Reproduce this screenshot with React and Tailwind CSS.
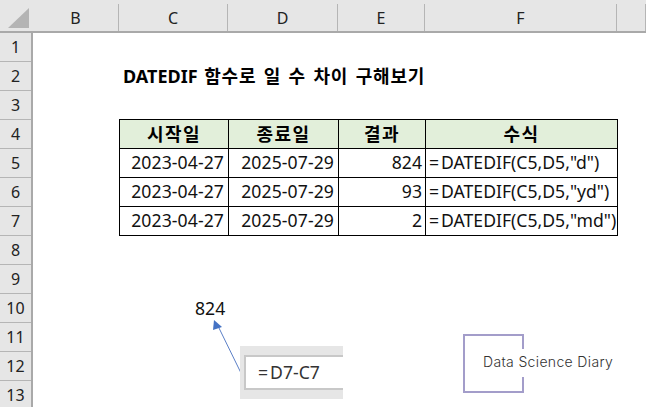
const font = "font-['Noto_Sans','Noto_Sans_CJK_KR',sans-serif]";

const columns = [
  { name: 'B', cls: 'w-[86px]' },
  { name: 'C', cls: 'w-[109px]' },
  { name: 'D', cls: 'w-[110px]' },
  { name: 'E', cls: 'w-[87px]' },
  { name: 'F', cls: 'w-[192px]' },
  { name: '', cls: 'w-[29px]' },
];

const rowsData = [
  { result: '824', formula: 'DATEDIF(C5,D5,"d")' },
  { result: '93', formula: 'DATEDIF(C5,D5,"yd")' },
  { result: '2', formula: 'DATEDIF(C5,D5,"md")' },
];

function ColumnHeader() {
  return (
    <div className="flex h-[33px] shrink-0 border-b-2 border-[#a9a9a9] bg-[#e6e6e6]">
      <div className="relative w-[33px] shrink-0">
        <svg className="absolute left-0 top-0" width="33" height="31">
          <polygon points="8,28 29,28 29,8" fill="#b4b4b4" />
        </svg>
      </div>
      {columns.map((c, i) => (
        <div key={i} className={`${c.cls} shrink-0 mt-1 flex items-center justify-center border-r border-[#b5b5b5] text-[16px] leading-none text-[#222]`}>
          {c.name}
        </div>
      ))}
    </div>
  );
}

function RowHeader() {
  const nums = [1, 2, 3, 4, 5, 6, 7, 8, 9, 10, 11, 12, 13];
  return (
    <div className="w-[33px] shrink-0 border-r-2 border-[#a9a9a9] bg-[#e6e6e6]">
      {nums.map((n) => (
        <div key={n} className="flex h-[29px] items-center justify-center border-b border-[#b5b5b5] text-[16px] leading-none text-[#222]">
          {n}
        </div>
      ))}
    </div>
  );
}

function HeadCell({ cls, children }) {
  return (
    <div className={`${cls} flex h-[28px] items-center justify-center border-r border-black bg-[#e2efda] text-[18px] font-bold leading-none tracking-[1.4px] text-black`}>
      {children}
    </div>
  );
}

function BodyCell({ cls, children }) {
  return (
    <div className={`${cls} flex h-[28px] items-center border-r border-black text-[17.6px] leading-none text-[#111]`}>
      {children}
    </div>
  );
}

function Table() {
  return (
    <div className="w-[499px] border-l border-t border-black">
      <div className="flex border-b border-black">
        <HeadCell cls="w-[109px]">시작일</HeadCell>
        <HeadCell cls="w-[110px]">종료일</HeadCell>
        <HeadCell cls="w-[87px]">결과</HeadCell>
        <HeadCell cls="w-[192px]">수식</HeadCell>
      </div>
      {rowsData.map((r, i) => (
        <div key={i} className="flex border-b border-black">
          <BodyCell cls="w-[109px] justify-end pr-[4px] tracking-[0.1px]">2023-04-27</BodyCell>
          <BodyCell cls="w-[110px] justify-end pr-[4px] tracking-[0.1px]">2025-07-29</BodyCell>
          <BodyCell cls="w-[87px] justify-end pr-[3px]">{r.result}</BodyCell>
          <BodyCell cls="w-[192px] pl-[3px] whitespace-nowrap">
            <span className="mr-[2px]">=</span>{r.formula}
          </BodyCell>
        </div>
      ))}
    </div>
  );
}

export default function App() {
  return (
    <div className={`${font} relative flex h-[407px] w-[646px] flex-col overflow-hidden bg-white`}>
      <ColumnHeader />
      <div className="flex min-h-0 flex-1">
        <RowHeader />
        <div className="relative flex-1 pl-[86px]">
          <div className="flex h-[86px] items-center pl-[4px] text-[18px] font-bold leading-none text-black">
            <span className="-mt-[1px] whitespace-nowrap">
              DATEDIF <span className="ml-[2px] tracking-[0.8px] [word-spacing:2px]">함수로 일 수 차이 구해보기</span>
            </span>
          </div>
          <Table />

          {/* floating shapes over the sheet */}
          <div className="absolute left-[162px] top-[267px] text-[17.6px] leading-none text-[#111]">824</div>
          <svg className="absolute left-[170px] top-[285px]" width="45" height="70">
            <line x1="38" y1="55" x2="15" y2="8" stroke="#5b7fc7" strokeWidth="1" />
            <polygon points="11,2 10,12 19,9" fill="#4472c4" />
          </svg>
          <div className="absolute left-[207px] top-[313px] flex h-[53px] w-[103px] items-center bg-[#e6e6e6] pl-[4px]">
            <div className="flex h-[35px] w-full items-center border-y-2 border-l-2 border-[#c8c8c8] bg-white pl-[12px] text-[17.6px] leading-none text-[#333]">
              <span className="mr-[2px]">=</span>D7-C7
            </div>
          </div>
          <div className="absolute left-[430px] top-[301px] h-[59px] w-[61px] border-2 border-[#a39dca]" />
          <div className="absolute left-[470px] top-[316px] h-[28px] w-[24px] bg-white" />
          <div className="absolute left-[450px] top-[322px] whitespace-nowrap font-['Inter',sans-serif] text-[14px] font-light leading-none tracking-[0.35px] text-[#333]">
            Data Science Diary
          </div>
        </div>
      </div>
    </div>
  );
}
